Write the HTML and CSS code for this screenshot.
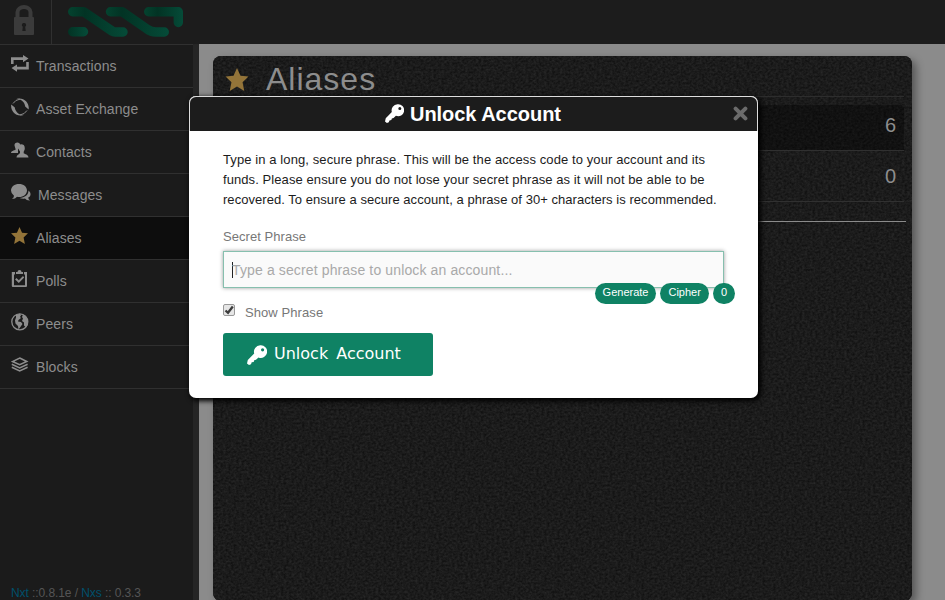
FILE: index.html
```html
<!DOCTYPE html>
<html lang="en">
<head>
<meta charset="utf-8">
<title>Aliases</title>
<link rel="stylesheet" href="styles.css">
</head>
<body>
<svg width="0" height="0" class="defs">
  <symbol id="star" viewBox="0 0 24 24"><path d="M12 0l3.600 8 8.400.9-6.200 5.900 1.800 9.200-7.600-4.600L4.400 24l1.800-9.200L0 8.900l8.400-.9z"/></symbol>
  <symbol id="key" viewBox="0 0 20 20"><path fill-rule="evenodd" d="M13.200.3A6.400 6.400 0 0 0 7.200 8.500L.8 15 0 18.500 2 20 4 19.200 4.700 17.300 6.700 16.900 7.200 15.200 9 14.800 11.500 12.400A6.300 6.300 0 1 0 13.200.3zM15.600 3.200a1.600 1.600 0 1 1 0 3.200 1.600 1.600 0 0 1 0-3.200z"/></symbol>
</svg>
<div class="app">
  <header class="topbar">
    <div class="lock">
      <svg width="22" height="30" viewBox="0 0 22 30"><path d="M4.500 13V7a6.500 5 0 0 1 13 0v6" fill="none" stroke="#3b3b3b" stroke-width="4"/><rect x="1" y="12" width="20" height="18" rx="1" fill="#3b3b3b"/><path d="M11 18a2 2 0 0 1 1.200 3.700L12.700 26H9.300l.5-4.300A2 2 0 0 1 11 18z" fill="#1c1c1c"/></svg>
    </div>
    <svg class="logo" width="116" height="30" viewBox="0 0 116 30">
      <defs>
        <linearGradient id="g1" x1="0" x2="60" y1="0" y2="0" gradientUnits="userSpaceOnUse"><stop offset="0" stop-color="#04432f"/><stop offset=".28" stop-color="#023324"/><stop offset="1" stop-color="#054b38"/></linearGradient>
        <linearGradient id="g2" x1="38" x2="101" y1="0" y2="0" gradientUnits="userSpaceOnUse"><stop offset="0" stop-color="#04432f"/><stop offset=".25" stop-color="#023324"/><stop offset="1" stop-color="#054b38"/></linearGradient>
        <linearGradient id="g3" x1="76" x2="115" y1="0" y2="0" gradientUnits="userSpaceOnUse"><stop offset="0" stop-color="#04432f"/><stop offset=".35" stop-color="#023324"/><stop offset="1" stop-color="#054b38"/></linearGradient>
        <linearGradient id="g4" x1="0" x2="20" y1="0" y2="0" gradientUnits="userSpaceOnUse"><stop offset="0" stop-color="#023324"/><stop offset="1" stop-color="#054b38"/></linearGradient>
      </defs>
      <g fill="none" stroke-width="9.400" stroke-linecap="round" stroke-linejoin="round">
        <path stroke="url(#g1)" d="M4.700 4.700H15.500L44 24Q45.500 25 47 25H55"/>
        <path stroke="url(#g2)" d="M42.500 4.700H54L79 22Q83 25 88 25H96.300"/>
        <path fill="url(#g4)" stroke="none" d="M4.700 20H15.500a4.700 4.700 0 0 1 0 9.400H4.700a4.700 4.700 0 0 1 0-9.400z"/>
        <path stroke="url(#g3)" d="M80.700 4.700H110.300V15.500"/>
      </g>
    </svg>
  </header>
  <div class="body">
    <nav class="side">
      <a><svg width="18" height="18" viewBox="0 0 18 18"><path d="M0 9V2.200H12V0l5.500 3.600L12 7.200V5H2.600V9zM17.800 7v7.500H6v2.300L.5 13.100 6 9.400v2.300h9.200V7z"/></svg><span>Transactions</span></a>
      <a><svg width="18" height="18" viewBox="0 0 18 18"><path d="M.2 6.500C-.6 13 4.500 19.200 12.500 17.200 7.500 16.800 4.200 13.500 3.800 9.500zM17.600 11.500C18.800 5 13 -1.200 5.500 .8 10.500 1.200 13.800 4.500 14.200 8.500z"/><path d="M2 5.500Q4.500 1.500 9 1.200M16 12.500Q13.500 16.500 9 16.900" fill="none" stroke="#8d8d8d" stroke-width="1"/></svg><span>Asset Exchange</span></a>
      <a><svg width="18" height="18" viewBox="0 0 18 18"><path d="M3.500 4.500C3 .5 9.500.2 9.300 4.500L7 8v4H0c0-2 3-2.500 4.700-3.600zM7 6.500c-.4-4.500 7-4.500 6.700 0 .4 2-.5 3-1 4.200v1.500C13.500 13 17.500 13.500 17.500 16.500H5.500c0-2.500 2.500-3 3.500-4.500v-1.800C8 9.300 7.300 8 7 6.500z"/></svg><span>Contacts</span></a>
      <a><svg width="20" height="18" viewBox="0 0 20 18"><path d="M8 0c4.500 0 8 2.700 8 6.500S12.500 13 8 13q-1 0-2-.2Q4.500 15 1 15q2-1.500 2-3.300Q0 9.700 0 6.500C0 2.700 3.500 0 8 0zM17.500 6.500C20.500 9 20 12 17.300 13.500q-.2 1.800 1.700 3-3.500.2-5-1.900-3 .3-5.500-.7C14 13.500 17.500 11 17.500 6.500z"/></svg><span>Messages</span></a>
      <a class="active"><svg width="17" height="17"><use href="#star"/></svg><span>Aliases</span></a>
      <a><svg width="18" height="18" viewBox="0 0 18 18"><path fill-rule="evenodd" d="M.8 2H4V4.500H3v10.700h11V4.500h-1V2h3V16q0 1-1 1H1.800q-1 0-1-1zM5 2h1.500q0-2 2-2t2 2H12v2H5zM5.500 8l2.300 2.300L12 6l1.200 1.400-5.400 5.700-3.700-3.600z"/></svg><span>Polls</span></a>
      <a><svg width="18" height="18" viewBox="0 0 18 18"><circle cx="8.800" cy="8.800" r="8" fill="none" stroke="#8d8d8d" stroke-width="1.300"/><path d="M5 2l4-1.300 1 1.500L9 4l1 1-2.500 2-.5 1.500 3 .5 1.500 2L9 14.500 7.500 16.500 7 13 4.500 10.500 4 7.500 5 4.500zM12 1.500l3 2 2 4v4l-2 3-2-2V9.500L11 8l1-2.500L11 4z"/></svg><span>Peers</span></a>
      <a><svg width="18" height="18" viewBox="0 0 18 18"><path d="M8.700 2L15.800 5.500 8.700 8.700 1.500 5.500zM.8 8.300l7.900 3.600 7.900-3.600M.8 11.300l7.900 3.600 7.900-3.600" fill="none" stroke="#8d8d8d" stroke-width="1.500"/></svg><span>Blocks</span></a>
      <div class="version"><b>Nxt</b> ::0.8.1e / <b>Nxs</b> :: 0.3.3</div>
    </nav>
    <main class="content">
      <section class="panel">
        <svg class="weave" width="100%" height="100%">
          <filter id="grain" x="0" y="0" width="100%" height="100%" color-interpolation-filters="sRGB"><feTurbulence type="fractalNoise" baseFrequency=".38 .45" numOctaves="2" seed="4"/><feColorMatrix values=".13 0 0 0 .042  .13 0 0 0 .042  .13 0 0 0 .042  0 0 0 0 1"/></filter>
          <rect width="100%" height="100%" filter="url(#grain)"/>
        </svg>
        <h1><svg width="24" height="23"><use href="#star"/></svg><span>Aliases</span></h1>
        <div class="row dark">6</div>
        <div class="row">0</div>
        <div class="rule"></div>
      </section>
    </main>
  </div>
</div>
<div class="modal">
  <div class="modal-head"><svg class="key" width="19" height="19"><use href="#key"/></svg><span>Unlock Account</span>
    <svg class="close" width="15" height="15" viewBox="0 0 15 15"><path d="M2.600 2.600l9.800 9.800M12.400 2.600L2.600 12.400" stroke="#6b6b6b" stroke-width="4" stroke-linecap="round"/></svg></div>
  <div class="modal-body">
    <p><span class="loose">Type in a long, secure phrase. This will be the access code to your account and its</span><br><span class="mid">funds. Please ensure you do not lose your secret phrase as it will not be able to be</span><br>recovered. To ensure a secure account, a phrase of 30+ characters is recommended.</p>
    <label class="field-label">Secret Phrase</label>
    <div class="field"><i class="caret"></i><span>Type a secret phrase to unlock an account...</span>
      <div class="badges"><em>Generate</em><em>Cipher</em><em>0</em></div></div>
    <div class="check"><i class="box"><svg width="10" height="10" viewBox="0 0 10 10"><path d="M1.500 5.500l2.500 2.300L8.800 1.500" fill="none" stroke="#3c3c3c" stroke-width="2.300"/></svg></i><span>Show Phrase</span></div>
    <div class="button"><svg width="20" height="20"><use href="#key"/></svg><span>Unlock Account</span></div>
  </div>
</div>
</body>
</html>
```
FILE: styles.css
```css
* { box-sizing: border-box; }
body { margin: 0; width: 945px; height: 600px; overflow: hidden; font: 14px "Liberation Sans", Arial, sans-serif; background: #8b8b8b; color: #8d8d8d; }
.defs { position: absolute; }
svg { display: block; flex: none; fill: currentColor; }
.app { display: flex; flex-direction: column; height: 600px; }
.topbar { display: flex; height: 44px; background: #1c1c1c; flex: none; }
.lock { width: 52px; border-right: 1px solid #303030; padding: 5px 0 0 13px; }
.logo { margin: 7px 0 0 16px; }
.body { display: flex; flex: 1; }
.side { width: 199px; background: #1b1b1b; border-right: 6px solid #252525; display: flex; flex-direction: column; }
.side a { display: flex; height: 43px; border-top: 1px solid #303030; padding: 10px 0 0 11px; gap: 7px; flex: none; letter-spacing: .08px; }
.side a span { line-height: 22px; }
.side a.active { background: #0d0d0d; gap: 8px; }
.side a.active svg, h1 svg { color: #937439; }
.version { border-top: 1px solid #303030; flex: 1; display: flex; align-items: flex-end; padding: 0 0 1px 11px; font-size: 12px; line-height: 14px; letter-spacing: -.08px; color: #555; white-space: pre; }
.version b { font-weight: normal; color: #00506b; }
.content { flex: 1; padding: 12px 33px 0 14px; }
.panel { position: relative; z-index: 0; height: 545px; border-radius: 8px; padding: 0 8px; box-shadow: 4px 4px 8px rgba(0,0,0,.4); background: #1b1b1b; }
.weave { position: absolute; inset: 0; z-index: -1; border-radius: 8px; }
h1 { margin: 0 0 8px; height: 41px; border-bottom: 1px solid #2d2d2d; font-size: 32px; font-weight: normal; letter-spacing: 1px; line-height: 46px; display: flex; gap: 17px; padding-left: 4px; }
h1 svg { margin-top: 12px; }
.row { height: 51px; padding-right: 8px; border-bottom: 1px solid #303030; text-align: right; font-size: 20px; line-height: 50px; }
.row.dark { height: 46px; line-height: 40px; background: rgba(0,0,0,.35); border-radius: 4px 4px 0 0; }
.rule { height: 1px; background: #8b8b8b; margin: 19px -2px 0 0; }
.modal { position: absolute; left: 189px; top: 96px; width: 569px; height: 302px; background: #fff; border-radius: 7px; box-shadow: 2px 2px 5px 1px #000; }
.modal-head { height: 35px; background: #1c1c1c; border: 1px solid #ddd; border-bottom: 0; border-radius: 7px 7px 0 0; display: flex; align-items: center; padding-left: 195px; padding-right: 9px; gap: 6px; color: #fff; font-size: 20px; font-weight: bold; letter-spacing: -.04px; }
.key { margin-top: -2px; }
.close { margin: -2px 0 0 auto; }
.modal-body { padding: 19px 34px 0; }
.modal-body p { margin: 0; font-size: 13px; line-height: 20px; color: #1c1c1c; white-space: nowrap; letter-spacing: .045px; }
.loose { letter-spacing: .1px; }
.mid { letter-spacing: .08px; }
.field-label { display: block; margin-top: 17px; font-size: 13px; line-height: 20px; letter-spacing: .05px; color: #777; }
.field { position: relative; width: 501px; height: 37px; margin-top: 4px; border: 1px solid #86bfae; background: #fafafa; box-shadow: 0 0 4px rgba(0,0,0,.4); display: flex; align-items: center; padding-left: 8px; color: #a9a9a9; letter-spacing: .13px; }
.caret { width: 1px; height: 16px; background: #222; margin-right: -1px; }
.badges { position: absolute; right: -12px; top: 31px; display: flex; gap: 4px; }
.badges em { font: 11px/19px "Liberation Sans", Arial, sans-serif; height: 21px; border-radius: 11px; padding: 0 8px; background: #0f8264; color: #fff; letter-spacing: 0; }
.check { display: flex; margin-top: 15px; gap: 10px; font-size: 13px; letter-spacing: .08px; line-height: 20px; height: 20px; color: #777; }
.box { width: 12px; height: 12px; margin-top: 1px; border: 1px solid #999; border-radius: 2px; background: #e6e6e6; }
.button { width: 210px; height: 43px; margin-top: 10px; border-radius: 3px; background: #0f8264; color: #fff; display: flex; align-items: center; padding-left: 24px; gap: 7px; font-family: "DejaVu Sans", sans-serif; font-size: 16px; word-spacing: 3px; }
.button span { margin-top: -3px; }
```
